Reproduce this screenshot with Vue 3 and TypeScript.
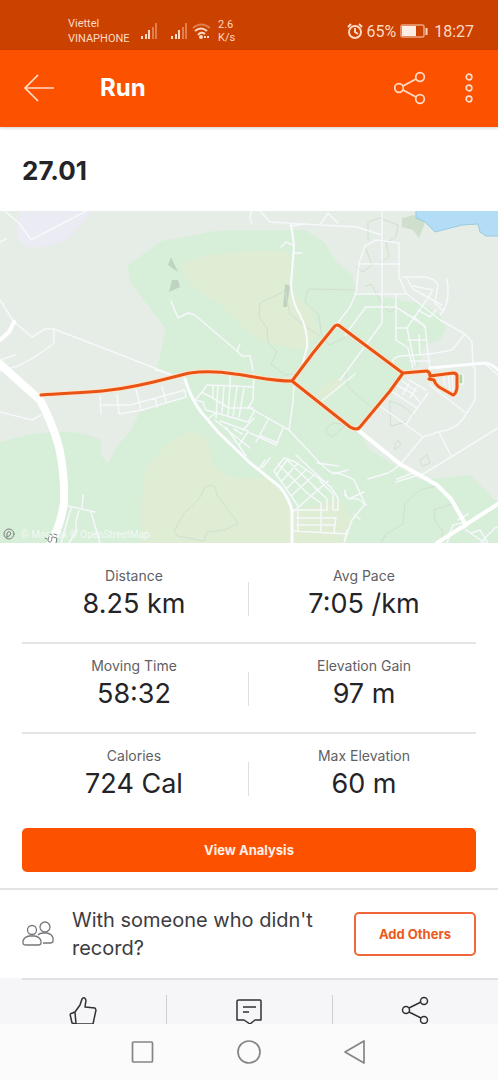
<script setup lang="ts">
interface Stat {
  label: string
  value: string
}

const rows: Stat[][] = [
  [
    { label: 'Distance', value: '8.25 km' },
    { label: 'Avg Pace', value: '7:05 /km' },
  ],
  [
    { label: 'Moving Time', value: '58:32' },
    { label: 'Elevation Gain', value: '97 m' },
  ],
  [
    { label: 'Calories', value: '724 Cal' },
    { label: 'Max Elevation', value: '60 m' },
  ],
]

const route =
  'M41 395C66 393 88 393 110 390C145 386 170 377 190 373Q210 370 235 374C258 377 272 381 292 381L313 353L334 327Q337 323 341 327L400 371L403 373L390 391L360 427Q357 431 350 427L292 381M403 373L427 371Q430 372 430 376L453 373Q457 373 457 376V388Q456 394 453 395L439 387Q435 384 434 380L429 379'

// Each string holds the centre lines of one neighbourhood's lanes.
const minorRoads: string[] = [
  'M5 211L20 224L31 240L86 211',
  'M0 242L6 239',
  'M0 300L14 322L32 337L45 329L54 329L170 374',
  'M54 329L54 343Q35 358 18 366L0 371',
  'M0 360L15 355',
  'M171 301L178 318L188 313Q192 313 196 316L237 351L242 356L250 356L253 370',
  'M237 351L240 344',
  'M0 412L32 420L41 415',
  'M155 370L172 375',
  'M100 396L101 414M101 405L130 405L185 390L186 397L142 410L119 414L117 394M136 389L141 410M155 398L157 407M162 386L166 402',
  'M68 506L95 512M83 495L82 509M71 508L61 543M79 511Q74 525 77 530L69 543M91 512L100 543',
  'M252 223Q248 217 252 211M260 211L270 222L320 225L357 227L382 235M320 225L328 213L338 223M292 226L305 224',
  'M281 247L286 242L293 245M293 253L302 253',
  'M382 211L382 323L340 380M399 243L399 277L406 293L440 320L465 334L472 342L473 367M399 243L376 240L365 246L359 263L356 293L350 307L337 324',
  'M359 264L400 264M355 294L408 294M355 374L323 400M396 295L396 340L408 348L413 368M366 307L396 307L425 326L430 370',
  'M366 307L345 335M397 328L407 328L432 292M408 340L425 340M407 328L415 365M419 335L420 355',
  'M402 277L425 277Q436 279 438 285L435 303L442 310M413 286L433 290M407 278L413 289L442 305M447 279Q451 304 440 315M418 310L430 317L436 310M413 316L424 326',
  'M465 334L452 350L430 354L400 356Q394 357 392 362M410 361L430 361M475 367V400L463 419Q455 430 438 432L423 437L404 460Q396 469 388 473Q378 476 368 479M423 437L380 406M439 432L451 456M430 385L466 413M428 393L406 424M409 380L426 390M498 428L425 473L396 482M484 363L498 375',
  'M396 385L412 393L420 402M402 381L416 391M403 394L409 384M410 398L416 388M391 391L417 408M443 373L445 385M448 374L450 390M452 374L453 391M463 375V384H458',
  'M294 384L293 402L289 430L250 408M289 430L319 462L330 472Q345 474 354 480L365 504L352 520L344 543M317 463L339 466M333 474L348 470M345 496L345 490M349 499L364 492M345 492L347 498L358 499L366 505M354 515L360 519',
  'M248 408L253 400L254 374M230 372V386M268 420L256 442M283 428L276 445L250 433M254 418L243 430M278 443L261 436M248 432L239 445M262 468L270 458M258 470L265 460',
  'M196 399L203 391L207 385L234 386L253 387M196 400L203 402L206 410L220 414L248 422L254 412M203 393L211 397L229 408L253 408M213 386L213 398M218 386L216 418M224 386L222 413M230 386L228 415M237 387L233 416M244 388L239 417M215 420L250 448M220 421L248 431M226 427L246 456M234 429L242 434M209 418L217 412',
  'M274 471L284 458L295 462L330 486L338 498L338 510H333M274 471L298 506M278 464L307 493M285 458L319 491M296 455L329 486M276 476L288 458M281 482L298 463M286 489L307 469M291 496L314 475M293 512L328 481M307 493L321 503L321 531M314 487L327 499V510M320 481L333 494L333 510M293 510H326M298 510L298 531M296 518L336 518L334 532M296 525L335 525M294 531L348 534M347 530L345 540',
  'M397 479L416 472',
  'M449 535L453 525L466 522M466 527L450 535L447 543M466 530L485 543M471 533L480 530L488 543M480 543L496 527L498 528M458 520L468 514',
]

const footpaths: string[] = [
  'M368 240L368 222L380 218L398 225L396 237L386 243L389 257L380 262M366 249L372 265L363 272L356 267M366 286L371 284L381 302L389 312L400 307M356 290L308 289L305 302L319 315L321 333L329 345L345 338M285 292L290 314L305 326L320 336M283 292L260 303L259 317L267 328L268 342L277 352L271 364L285 375L300 373',
  'M213 485Q216 487 217 495L238 523L225 530L207 532L204 541L177 536L174 531L184 513L199 499L205 487Z',
  'M346 370L348 387L364 401L370 406M390 401L401 405L414 415L406 422L391 426ZM326 429Q333 419 345 426L333 437Q325 433 326 429',
  'M440 485L420 490L405 503L403 524L386 534L381 543M455 503L434 510L435 520L443 532L441 540M395 444L398 440L401 445L395 449ZM420 460L427 455L430 463L423 466Z',
]
</script>

<template>
  <div class="screen">
    <div class="status">
      <div class="status-left">
        <div class="carrier">Viettel<br />VINAPHONE</div>
        <svg v-for="n in 2" :key="n" class="signal" viewBox="0 0 18 18" aria-hidden="true">
          <path d="M2 14v3M6 12v5M9 8v9" />
          <path class="faint" d="M13 5v12M16 1v16" />
        </svg>
        <svg class="wifi" viewBox="0 0 20 18" aria-hidden="true">
          <path class="faint" d="M1 6Q9 -1 18 6" />
          <path d="M3 9Q9 4 15 9M6 13Q9 9 13 12" />
          <circle cx="9" cy="15" r="1" />
          <path d="M13 14v2M16 14v2" />
        </svg>
        <div class="speed">2.6<br />K/s</div>
      </div>
      <div class="status-right">
        <svg class="alarm" viewBox="0 0 16 16" aria-hidden="true">
          <circle cx="8" cy="9" r="6" />
          <path d="M8 5v4l3 2M1 4l3-3M15 4l-3-3" />
        </svg>
        <span>65%</span>
        <svg class="battery" viewBox="0 0 28 14" aria-hidden="true">
          <rect class="shell" x="1" y="1" width="23" height="12" rx="1" />
          <rect class="charge" x="2" y="2" width="14" height="10" />
          <path d="M26.500 4v7" />
        </svg>
        <span class="clock">18:27</span>
      </div>
    </div>

    <header class="appbar">
      <button class="icon-button back" aria-label="Back">
        <svg viewBox="0 0 32 28" aria-hidden="true">
          <path d="M30 14H1M14 1L1 14L14 27" />
        </svg>
      </button>
      <h1>Run</h1>
      <button class="icon-button share" aria-label="Share">
        <svg viewBox="0 0 32 34" aria-hidden="true">
          <circle cx="5" cy="17" r="4.300" />
          <circle cx="26" cy="6" r="4.300" />
          <circle cx="26" cy="28" r="4.300" />
          <path d="M9 15L22 8M9 19L22 26" />
        </svg>
      </button>
      <button class="icon-button more" aria-label="More options">
        <svg viewBox="0 0 10 32" aria-hidden="true">
          <circle cx="5" cy="5" r="2.800" />
          <circle cx="5" cy="16" r="2.800" />
          <circle cx="5" cy="27" r="2.800" />
        </svg>
      </button>
    </header>

    <main>
      <section class="title">
        <h2>27.01</h2>
      </section>

      <div class="map">
        <svg viewBox="0 211 498 332" role="img" aria-label="Route map">
          <rect class="land" y="211" width="498" height="332" />
          <path
            class="park"
            d="M162 241L190 236L215 231L248 230H305L325 243L335 260L352 275L357 292L400 300L425 305L440 315L446 328L440 340L425 345L418 366L403 373L358 430L370 450L395 465L420 480L470 475L498 503V543H0V442Q40 430 70 432Q90 434 101 440V455L108 464L118 445L130 432L140 412L185 395V375L156 373L166 329L130 282L128 265Z"
          />
          <path
            class="meadow"
            d="M180 265L195 258L215 254L248 251H285Q292 254 290 270L290 290L310 310L320 335L300 350L262 342L240 325L220 305L190 285ZM142 500L145 470L165 445L190 430L208 440L213 465L230 477L270 478L295 510L340 500L352 520L343 543H142ZM335 378L348 380L326 400L315 395Z"
          />
          <path class="suburb" d="M20 211H92Q82 226 66 240Q46 248 27 248Q18 244 17 232Z" />
          <path class="scrub" d="M402 218L414 215L425 223L419 238L413 230L402 227Z" />
          <path class="water" d="M416 209L416 218L425 222L435 232L462 225L478 224L480 232L486 236H500V209Z" />
          <path class="rock" d="M171 257L178 272L168 265ZM172 280H178L180 287L169 292ZM285 284L290 286L287 307L283 307Z" />
          <path class="field" d="M459 375h4v9h-4z" />
          <path v-for="(d, i) in footpaths" :key="'f' + i" class="footpath" :d="d" />
          <path v-for="(d, i) in minorRoads" :key="'m' + i" class="minor" :d="d" />
          <path
            class="lane"
            d="M291 225L294 245L291 285Q292 302 300 315Q308 330 307 347L302 366"
          />
          <path
            class="street"
            d="M185 379Q190 397 201 412L218 432L249 462L280 487Q292 502 292 515V543M430 368L485 363Q492 364 498 370"
          />
          <path class="avenue" d="M358 430L400 464L437 485L451 499L466 525M437 543L498 504M14 322L9 332L0 340" />
          <path class="highway" d="M0 364L22 384L40 400Q52 422 59 447Q65 475 64 502Q61 525 50 545" />
          <path class="casing" :d="route" />
          <path class="route" :d="route" />
          <g class="marker">
            <circle cx="9" cy="534" r="5" />
            <path d="M7 537L7 533Q9 530 11 533Q11 536 7 537Z" />
          </g>
          <text class="credit" x="21" y="538">© Mapbox © OpenStreetMap</text>
          <path class="pier" d="M45 538l2 1M49 537Q47 541 49 542Q52 543 52 537M53 537l4 1l-1 5M50 534l2 1M54 534l3 1" />
        </svg>
      </div>

      <dl class="stats">
        <div v-for="(row, r) in rows" :key="r" class="stat-row">
          <div v-for="stat in row" :key="stat.label" class="stat">
            <dt>{{ stat.label }}</dt>
            <dd>{{ stat.value }}</dd>
          </div>
        </div>
      </dl>

      <div class="analysis">
        <button class="primary">View Analysis</button>
      </div>

      <section class="others">
        <svg class="people" viewBox="0 0 32 26" aria-hidden="true">
          <circle cx="10" cy="9" r="4.500" />
          <circle cx="23" cy="6" r="5" />
          <path d="M1 22V20Q2 16 7 15H13Q18 16 19 20V22Q19 24 16 24H4Q1 24 1 22Z" />
          <path d="M16 14Q18 12 21 12H25Q30 13 31 17V20Q31 22 28 22H21" />
        </svg>
        <p>With someone who didn't record?</p>
        <button class="outline">Add Others</button>
      </section>
    </main>

    <div class="actions">
      <button aria-label="Give kudos">
        <svg viewBox="0 0 32 32" aria-hidden="true">
          <path d="M3 19L8 17L13 10L15 4Q17 1 19 5L18 12L28 13L29 15L26 29H9L8 17M3 19L5 28L9 29" />
        </svg>
      </button>
      <button aria-label="Comment">
        <svg viewBox="0 0 32 32" aria-hidden="true">
          <path d="M5 5H26Q27 5 27 6V25H21L16 29L10 25H3V6Q3 5 5 5ZM9 12H22M9 17H15" />
        </svg>
      </button>
      <button aria-label="Share activity">
        <svg viewBox="0 0 32 32" aria-hidden="true">
          <circle cx="6" cy="15" r="3.500" />
          <circle cx="24" cy="6" r="3.500" />
          <circle cx="24" cy="25" r="3.500" />
          <path d="M9 13L21 7M9 17L21 23" />
        </svg>
      </button>
    </div>

    <nav class="system">
      <button aria-label="Recent apps">
        <svg viewBox="0 0 24 24" aria-hidden="true"><rect x="1.500" y="2" width="20" height="20" rx="1" /></svg>
      </button>
      <button aria-label="Home">
        <svg viewBox="0 0 24 24" aria-hidden="true"><circle cx="12" cy="12" r="11" /></svg>
      </button>
      <button aria-label="Go back">
        <svg viewBox="0 0 24 24" aria-hidden="true"><path d="M21 1V23L2 12Z" /></svg>
      </button>
    </nav>
  </div>
</template>

<style>
body {
  background: #fff;
}
</style>

<style scoped>
.screen {
  display: flex;
  flex-direction: column;
  min-height: 100vh;
  font-family: Inter, 'Liberation Sans', sans-serif;
  color: #242428;
  background: #fff;
}

svg {
  display: block;
  flex: none;
  fill: none;
  stroke: currentColor;
  stroke-width: 2;
  stroke-linejoin: round;
}

button {
  padding: 0;
  border: 0;
  background: none;
  color: inherit;
  font-family: inherit;
}

h1,
h2,
p,
dl,
dd {
  margin: 0;
}

.status {
  display: flex;
  justify-content: space-between;
  align-items: center;
  box-sizing: border-box;
  height: 50px;
  padding: 12px 24px 0 68px;
  background: #cb4100;
  color: #ffd9c4;
  font-family: Roboto, sans-serif;
}

.status-left,
.status-right {
  display: flex;
  align-items: center;
}

.carrier {
  width: 72px;
  font-size: 11px;
  line-height: 15px;
}

.signal {
  width: 18px;
  height: 18px;
  margin-right: 12px;
}

.faint {
  opacity: 0.4;
}

.wifi {
  width: 20px;
  height: 18px;
  margin-left: -8px;
  margin-right: 6px;
}

.speed {
  font-size: 11px;
  line-height: 13px;
}

.status-right {
  font-size: 16px;
}

.alarm {
  width: 16px;
  height: 16px;
  margin-right: 3px;
}

.battery {
  width: 28px;
  height: 14px;
  margin: 0 6px 0 4px;
}

.shell {
  stroke-width: 1;
}

.charge {
  fill: #ffeee4;
  stroke: none;
}

.appbar {
  position: relative;
  display: flex;
  align-items: center;
  box-sizing: border-box;
  height: 77px;
  padding: 0 24px 1px;
  background: #fc5200;
  color: #ffdcc8;
  box-shadow: 0 1px 3px rgba(0, 0, 0, 0.2);
}

.icon-button svg {
  width: 100%;
  stroke-width: 1.700;
}

.back {
  width: 32px;
}

.appbar h1 {
  flex: 1;
  margin-left: 44px;
  color: #fff;
  font-size: 24px;
  line-height: 32px;
  font-weight: 700;
}

.share {
  width: 32px;
  margin-right: 38px;
}

.more {
  width: 10px;
}

.title {
  padding: 28px 22px 24px;
}

.title h2 {
  font-size: 26px;
  line-height: 32px;
  font-weight: 700;
}

.map svg {
  width: 100%;
  height: auto;
  stroke-linecap: round;
}

.land {
  fill: #e5ede6;
  stroke: none;
}

.park {
  fill: #d7eed9;
  stroke: none;
}

.meadow {
  fill: #dfedd5;
  stroke: none;
}

.suburb {
  fill: #ebebf4;
  stroke: none;
}

.scrub {
  fill: #d0dfcd;
  stroke: none;
}

.water {
  fill: #b3dcf6;
  stroke: #9accdc;
  stroke-width: 1;
}

.rock {
  fill: #bfd3c1;
  stroke: none;
}

.field {
  fill: #a8d89a;
  stroke: none;
}

.footpath {
  stroke: #d1dfd1;
  stroke-width: 1;
}

.minor {
  stroke: #f6f8fb;
  stroke-width: 1.500;
}

.lane {
  stroke: #fafbfe;
  stroke-width: 2;
}

.street {
  stroke: #fcfdff;
  stroke-width: 3;
}

.avenue {
  stroke: #fff;
  stroke-width: 4;
}

.highway {
  stroke: #fff;
  stroke-width: 8;
}

.casing {
  stroke: #ffe5cd;
  stroke-width: 5;
}

.route {
  stroke: #e95314;
  stroke-width: 3;
}

.marker {
  stroke: #777d79;
  stroke-width: 1;
}

.credit {
  fill: #fff;
  fill-opacity: 0.7;
  stroke: none;
  font-family: Roboto, sans-serif;
  font-size: 10px;
}

.pier {
  stroke: #737a76;
  stroke-width: 1;
}

.stats {
  padding: 11px 22px 0;
}

.stat-row {
  display: grid;
  grid-template-columns: 1fr 1fr;
  gap: 6px;
  box-sizing: border-box;
  height: 90px;
  padding-top: 12px;
  border-bottom: 2px solid #e4e4e4;
}

.stat-row:last-child {
  border-bottom: 0;
}

.stat {
  position: relative;
  text-align: center;
}

.stat:first-child::after {
  content: '';
  position: absolute;
  top: 16px;
  right: -3px;
  width: 1px;
  height: 34px;
  background: #dfdfe1;
}

dt {
  color: #5f5f64;
  font-size: 14px;
  line-height: 20px;
}

dd {
  font-size: 27px;
  line-height: 36px;
}

.analysis {
  padding: 4px 22px 16px;
  border-bottom: 2px solid #e4e4e6;
}

.primary,
.outline {
  height: 44px;
  border-radius: 5px;
  font-size: 13px;
  font-weight: 700;
}

.primary {
  display: block;
  width: 100%;
  background: #fc5200;
  color: #ffefe6;
}

.others {
  display: flex;
  align-items: center;
  gap: 18px;
  height: 88px;
  padding: 0 22px;
}

.people {
  width: 32px;
  height: 26px;
  color: #77777b;
  stroke-width: 1.300;
}

.others p {
  flex: 1;
  color: #3c3c41;
  font-size: 20px;
  line-height: 28px;
}

.outline {
  width: 122px;
  border: 2px solid #f0683a;
  color: #ec5a20;
}

.actions {
  display: grid;
  grid-template-columns: repeat(3, 1fr);
  height: 46px;
  overflow: hidden;
  background: linear-gradient(#e2e2e6, #e2e2e6) 22px 0 / 100% 2px no-repeat #f6f6f9;
  color: #303035;
}

.actions button {
  display: flex;
  justify-content: center;
  height: 58px;
  margin-top: 17px;
  border-left: 1px solid #cfcfd3;
}

.actions button:first-child {
  border-left: 0;
}

.actions svg {
  width: 32px;
  height: 32px;
  stroke-width: 1.500;
}

.system {
  display: flex;
  flex: 1;
  justify-content: center;
  align-items: center;
  gap: 82px;
  min-height: 56px;
  background: #fbfbfb;
  color: #858585;
}

.system svg {
  width: 24px;
  height: 24px;
  stroke-width: 1.700;
}
</style>
